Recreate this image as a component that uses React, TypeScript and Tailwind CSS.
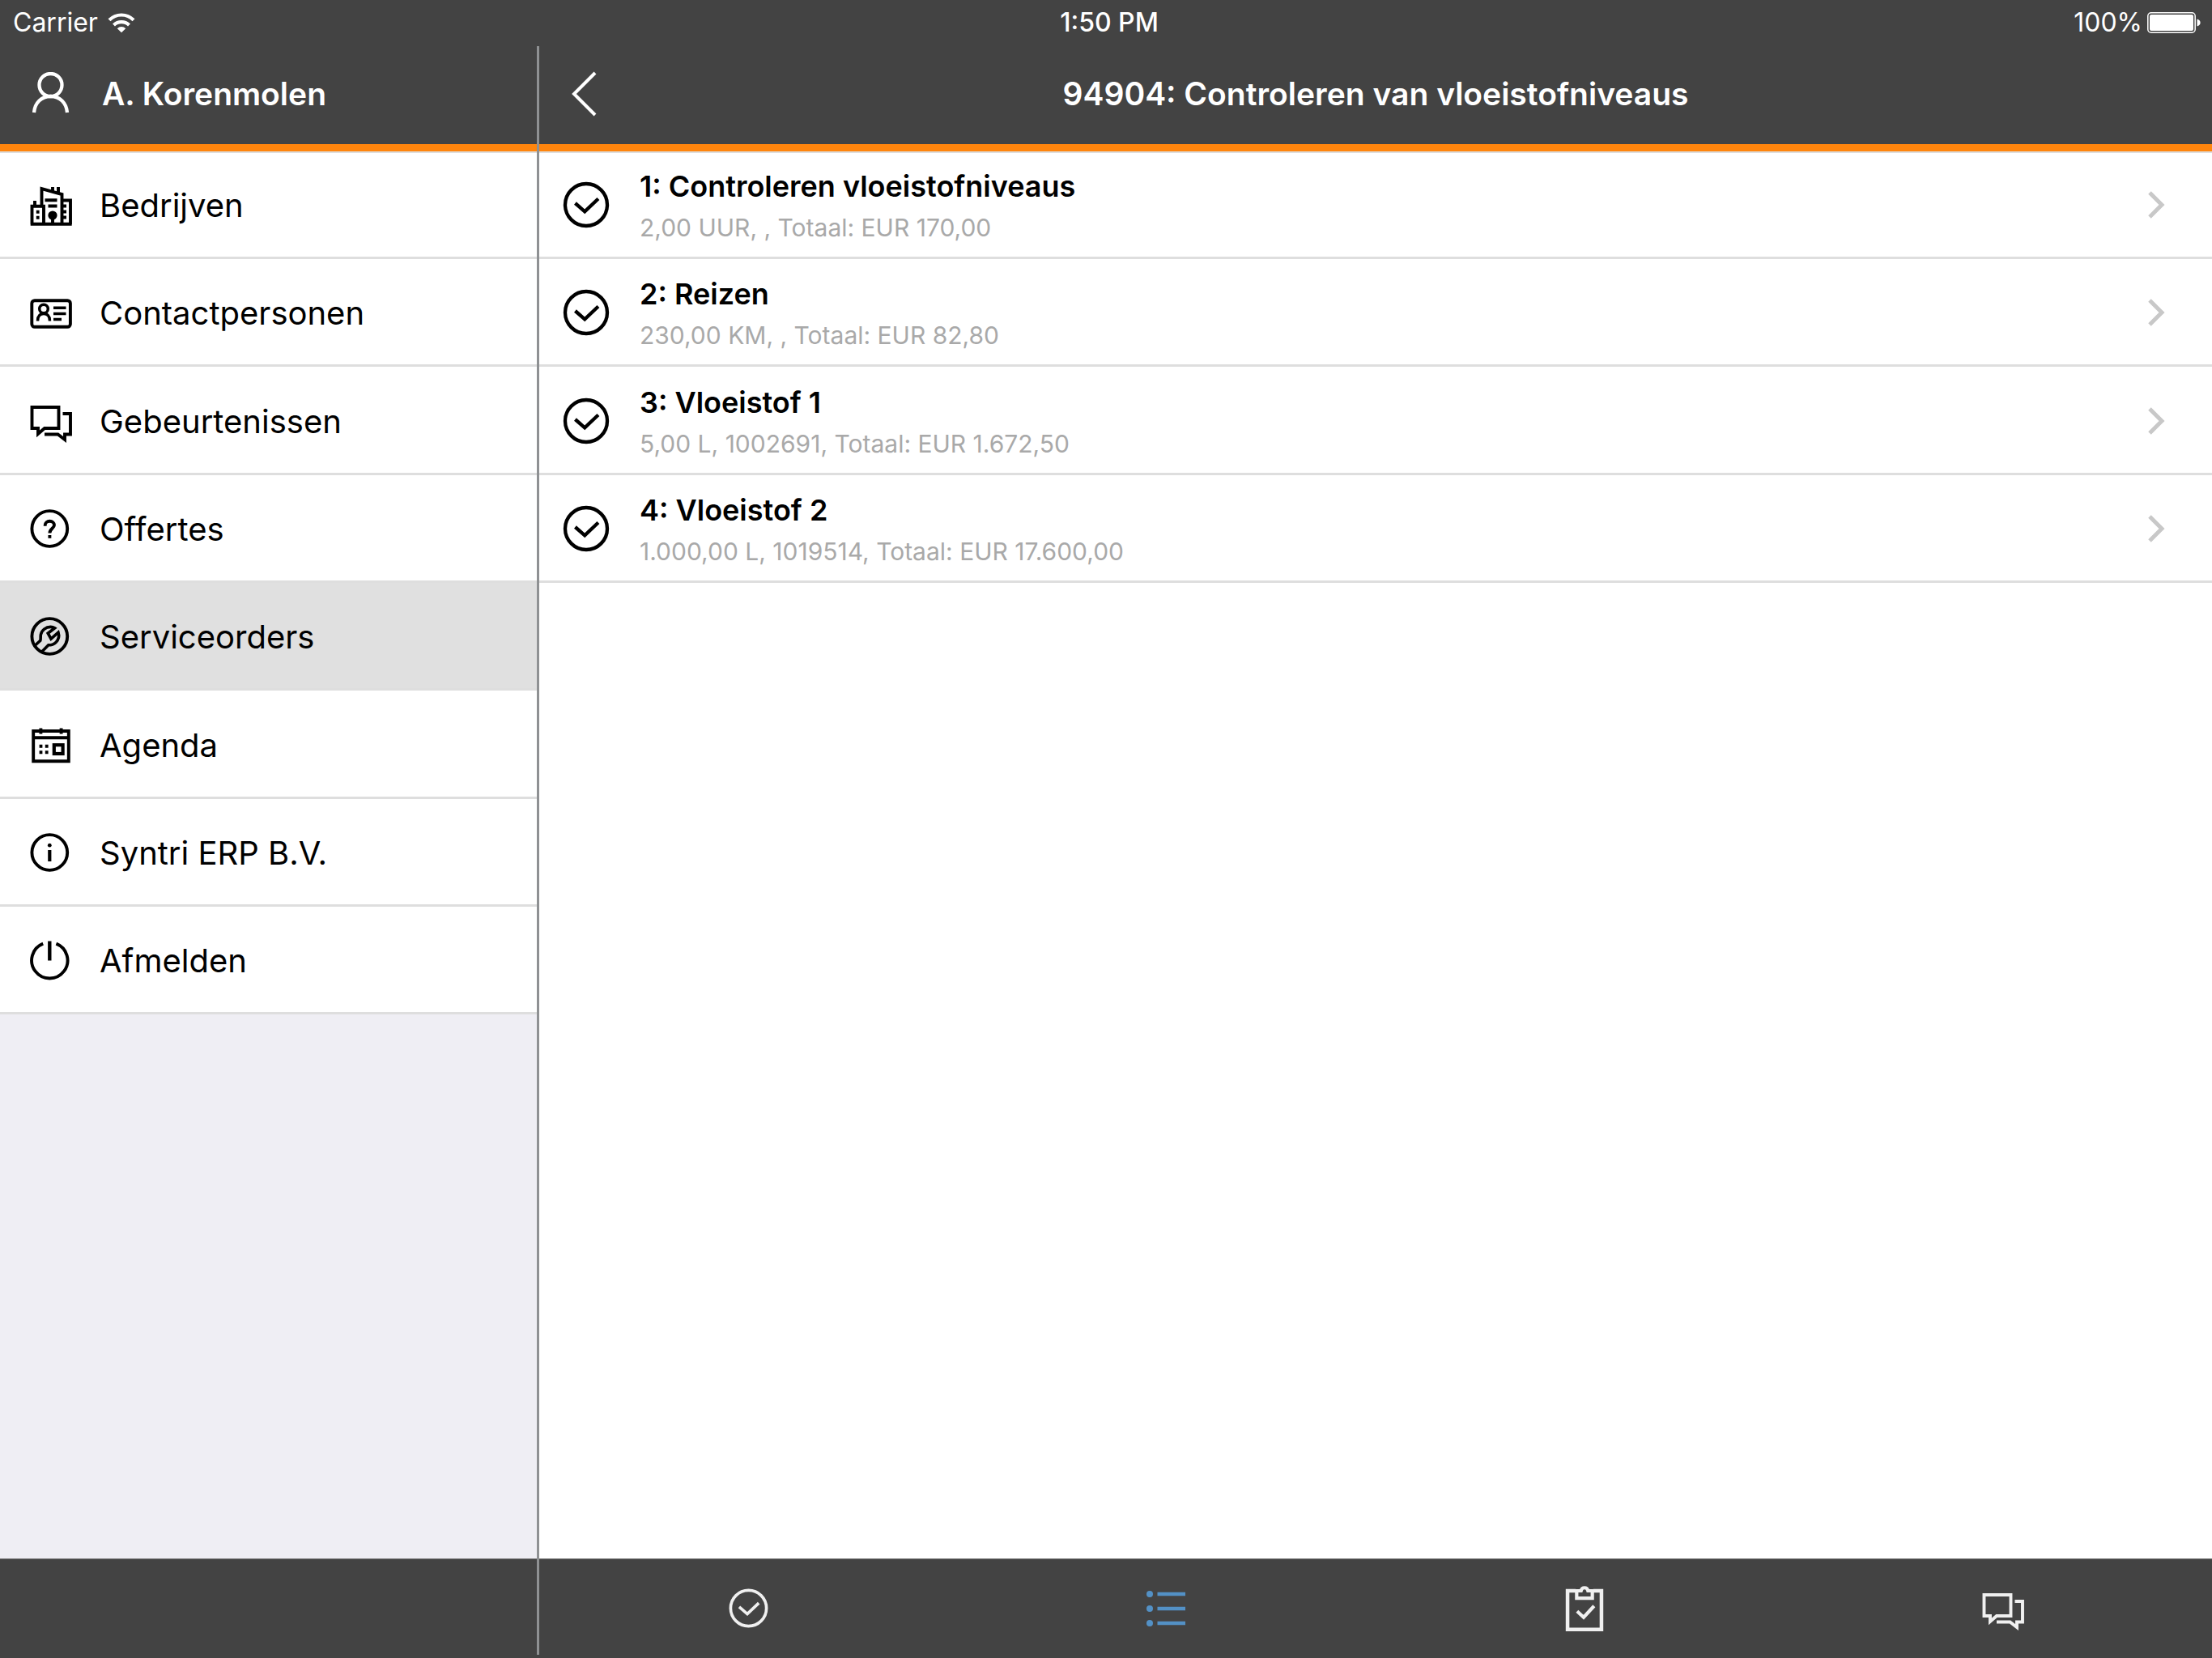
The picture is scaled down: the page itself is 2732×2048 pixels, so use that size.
import { useState } from "react";
import type { ReactNode } from "react";
import clsx from "clsx";

type IconProps = { className?: string; children: ReactNode };

function Icon({ className = "size-[54px]", children }: IconProps) {
  return (
    <svg viewBox="0 0 54 54" fill="none" stroke="currentColor" strokeWidth="3.9" className={clsx("shrink-0", className)} aria-hidden="true">
      {children}
    </svg>
  );
}

const UserIcon = () => (
  <Icon>
    <circle cx="26.5" cy="16" r="14" strokeWidth="4.3" />
    <path d="M6 50C7 38 15 30 26.5 30S46 38 47 50" strokeWidth="4.3" />
  </Icon>
);

const CompanyIcon = () => (
  <Icon>
    <path d="M3.5 51V28.7H18V51M15.5 28.7V7L40.5 14V51M41 21.5H51V51M1.7 50.7H52.7" />
    <path d="M7 29V22M29 11V5M36 13V5" />
    <path d="M19.5 21.3H34.5M23.5 28.5H34.5M29 42V50M42 28.5H46M42 35.5H46M42 42.5H46" />
    <circle cx="29" cy="40" r="5.6" fill="currentColor" stroke="none" />
    <path d="M8.8 35.7H12.6M8.8 42.7H12.6" />
  </Icon>
);

const ContactIcon = () => (
  <Icon>
    <rect x="3.3" y="12.2" width="47.6" height="32.6" rx="3.5" />
    <circle cx="18" cy="22.5" r="5.3" strokeWidth="3.5" />
    <path d="M10.5 37.5C10.5 31.5 13.5 28.5 18 28.5S25.5 31.5 25.5 37.5" strokeWidth="3.5" />
    <path d="M30 21.3H45.5M30 28.5H45.5M30 35.5H40" strokeWidth="3.5" />
  </Icon>
);

const ChatIcon = () => (
  <Icon>
    <path d="M3.5 10H36.5V36H19L11 43V36H3.5Z" />
    <path d="M41.5 18H51V43.5H44V50L35.5 43.5H19" />
  </Icon>
);

const QuoteIcon = () => (
  <Icon>
    <circle cx="25.3" cy="27" r="21.9" />
    <path d="M19.7 23.8V22.8C19.7 19.8 22.2 17.7 25.4 17.7S31 19.8 31 22.6C31 26.8 25.4 27 25.4 32.5" />
    <path d="M25.4 35V38.8" />
  </Icon>
);

const ServiceIcon = () => (
  <Icon>
    <circle cx="25.3" cy="27" r="21.9" />
    <path d="M7.5 38L13.8 32.2C14.6 29.8 13.8 27.5 14.4 24.8C15.5 19.4 20.5 15.4 26.5 15.4C28.6 15.4 30.4 16 31.6 16.8L23.2 23.2L27 30.2L36 22.2C37.4 26.5 36.2 31.2 33 34.4C30.5 36.8 27.5 37.8 23.8 37.8L15.2 46.5" strokeWidth="3.6" />
  </Icon>
);

const AgendaIcon = () => (
  <Icon>
    <path d="M5.2 10H48.8V47.2H5.2ZM5.2 18.3H48.8" />
    <path d="M14.4 6.5V13.5M39.6 6.5V13.5" />
    <rect x="30.8" y="27.2" width="10.8" height="10.8" strokeWidth="4.2" />
    <path d="M12.6 28.8H16.4M19.8 28.8H23.6M12.6 36.2H16.4M19.8 36.2H23.6" />
  </Icon>
);

const InfoIcon = () => (
  <Icon>
    <circle cx="25.3" cy="27" r="21.9" />
    <path d="M25.3 24V38" strokeWidth="4.2" />
    <circle cx="25.3" cy="18.2" r="2.4" fill="currentColor" stroke="none" />
  </Icon>
);

const PowerIcon = () => (
  <Icon>
    <path d="M17.2 6.6A22.2 22.2 0 1 0 33.4 6.6" />
    <path d="M25.3 3.5V27.5" strokeWidth="4.4" />
  </Icon>
);

const CheckIcon = ({ className }: { className?: string }) => (
  <Icon className={className}>
    <circle cx="27" cy="27" r="23.4" />
    <path d="M14.8 25.2L25.4 34.5L40.4 20.2" />
  </Icon>
);

const ListIcon = () => (
  <Icon>
    <path d="M15.5 9H50M15.5 27H50M15.5 45H50" strokeWidth="4.4" />
    <g fill="currentColor" stroke="none">
      <circle cx="6" cy="9" r="4" />
      <circle cx="6" cy="27" r="4" />
      <circle cx="6" cy="45" r="4" />
    </g>
  </Icon>
);

const ClipboardIcon = () => (
  <Icon className="size-[58px]">
    <path d="M17 6.5H7.5V51H46.5V6.5H37" strokeWidth="4.2" />
    <path d="M18 5V15H36V5M17 6.5H23C23.5 4.2 25 3 27 3S30.5 4.2 31 6.5H37" />
    <path d="M18.5 30L26 37L38 24" />
  </Icon>
);

const menu = [
  { label: "Bedrijven", icon: <CompanyIcon /> },
  { label: "Contactpersonen", icon: <ContactIcon /> },
  { label: "Gebeurtenissen", icon: <ChatIcon /> },
  { label: "Offertes", icon: <QuoteIcon /> },
  { label: "Serviceorders", icon: <ServiceIcon /> },
  { label: "Agenda", icon: <AgendaIcon /> },
  { label: "Syntri ERP B.V.", icon: <InfoIcon /> },
  { label: "Afmelden", icon: <PowerIcon /> },
];

const lines = [
  { title: "1: Controleren vloeistofniveaus", detail: "2,00 UUR, , Totaal: EUR 170,00" },
  { title: "2: Reizen", detail: "230,00 KM, , Totaal: EUR 82,80" },
  { title: "3: Vloeistof 1", detail: "5,00 L, 1002691, Totaal: EUR 1.672,50" },
  { title: "4: Vloeistof 2", detail: "1.000,00 L, 1019514, Totaal: EUR 17.600,00" },
];

const tabs = [
  { label: "Status", icon: <CheckIcon className="size-[51px]" /> },
  { label: "Regels", icon: <ListIcon /> },
  { label: "Checklist", icon: <ClipboardIcon /> },
  { label: "Berichten", icon: <ChatIcon /> },
];

// rows average a third of a point over 133px, so every third one is a pixel taller
const rowClass = "flex h-[133px] items-center border-b-[3px] border-[#dedede] pt-[2px] nth-[3n]:h-[134px] first:border-t-2 first:pt-0";

function StatusBar() {
  return (
    <div className="grid h-[57px] grid-cols-3 items-center pr-3 pb-[2px] pl-4 text-[32px] leading-[40px]">
      <div className="flex items-center gap-3">
        <span>Carrier</span>
        <svg viewBox="0 0 34 26" className="h-[26px] w-[34px]" fill="none" stroke="currentColor" strokeWidth="4.2" aria-hidden="true">
          <path d="M2 9.8A21 21 0 0 1 32 9.8M7.5 15.9A13.6 13.6 0 0 1 26.5 15.9" />
          <path d="M17 25.3L11.8 20.2A7.4 7.4 0 0 1 22.2 20.2Z" fill="currentColor" stroke="none" />
        </svg>
      </div>
      <span className="pl-1 text-center font-medium">1:50 PM</span>
      <div className="flex items-center justify-end gap-[6px]">
        <span>100%</span>
        <svg viewBox="0 0 68 26" className="h-[26px] w-[68px]" fill="currentColor" aria-hidden="true">
          <rect x="0.8" y="0.8" width="58.4" height="24.4" rx="4" fill="none" stroke="currentColor" strokeWidth="1.5" />
          <rect x="3" y="3" width="54" height="20" rx="2" />
          <path d="M61.5 8.5C67 9.5 67 16.5 61.5 17.5Z" />
        </svg>
      </div>
    </div>
  );
}

export default function App() {
  const [active, setActive] = useState("Serviceorders");
  const [tab, setTab] = useState("Regels");

  return (
    <div className="flex min-h-screen flex-col bg-[#434343] pb-1 font-['Inter',sans-serif] text-white">
      <StatusBar />
      <div className="flex flex-1">
        <aside className="flex w-[666px] shrink-0 flex-col border-r-[3px] border-[#8f9193]">
          <div className="flex h-[130px] items-center gap-9 border-b-[9px] border-[#ff850d] pb-1 pl-9">
            <UserIcon />
            <span className="text-[39px] leading-[48px] font-semibold">A. Korenmolen</span>
          </div>
          <nav className="flex-1 bg-[#efeef4] text-black">
            {menu.map(item => (
              <a
                key={item.label}
                href="#"
                onClick={() => setActive(item.label)}
                className={clsx(rowClass, "gap-[33px] pl-9 text-[40px] leading-[48px]", active === item.label ? "bg-[#e0e0e0]" : "bg-white")}
              >
                {item.icon}
                <span className="pt-[2px]">{item.label}</span>
              </a>
            ))}
          </nav>
          <div className="h-[119px] border-t border-[#777777]" />
        </aside>

        <main className="flex min-w-0 flex-1 flex-col">
          <header className="flex h-[130px] items-center border-b-[9px] border-[#ff850d] px-9 pb-1">
            <button type="button" aria-label="Terug" className="w-12">
              <svg viewBox="0 0 36 58" className="h-[58px] w-9" fill="none" stroke="currentColor" strokeWidth="4" aria-hidden="true">
                <path d="M33 3L7 29L33 55" />
              </svg>
            </button>
            <h1 className="flex-1 text-center text-[39px] leading-[48px] font-semibold">94904: Controleren van vloeistofniveaus</h1>
            <span className="w-12" />
          </header>
          <div className="flex-1 bg-white text-black">
            {lines.map(line => (
              <a key={line.title} href="#" className={clsx(rowClass, "pr-14 pl-7")}>
                <CheckIcon className="size-[60px]" />
                <div className="min-w-0 flex-1 pt-[6px] pl-9">
                  <p className="text-[36px] leading-[50px] font-semibold">{line.title}</p>
                  <p className="text-[30px] leading-[52px] text-[#a9a9a9]">{line.detail}</p>
                </div>
                <svg viewBox="0 0 24 36" className="h-9 w-6" fill="none" stroke="#c8c8c8" strokeWidth="5" aria-hidden="true">
                  <path d="M3 3L18 18L3 33" />
                </svg>
              </a>
            ))}
          </div>
          <nav className="flex h-[119px] border-t border-[#777777]">
            {tabs.map(t => (
              <button
                key={t.label}
                type="button"
                aria-label={t.label}
                onClick={() => setTab(t.label)}
                className={clsx("flex flex-1 items-center justify-center pt-[3px]", tab === t.label ? "text-[#5391c6]" : "text-[#f0f0f0]")}
              >
                {t.icon}
              </button>
            ))}
          </nav>
        </main>
      </div>
    </div>
  );
}
